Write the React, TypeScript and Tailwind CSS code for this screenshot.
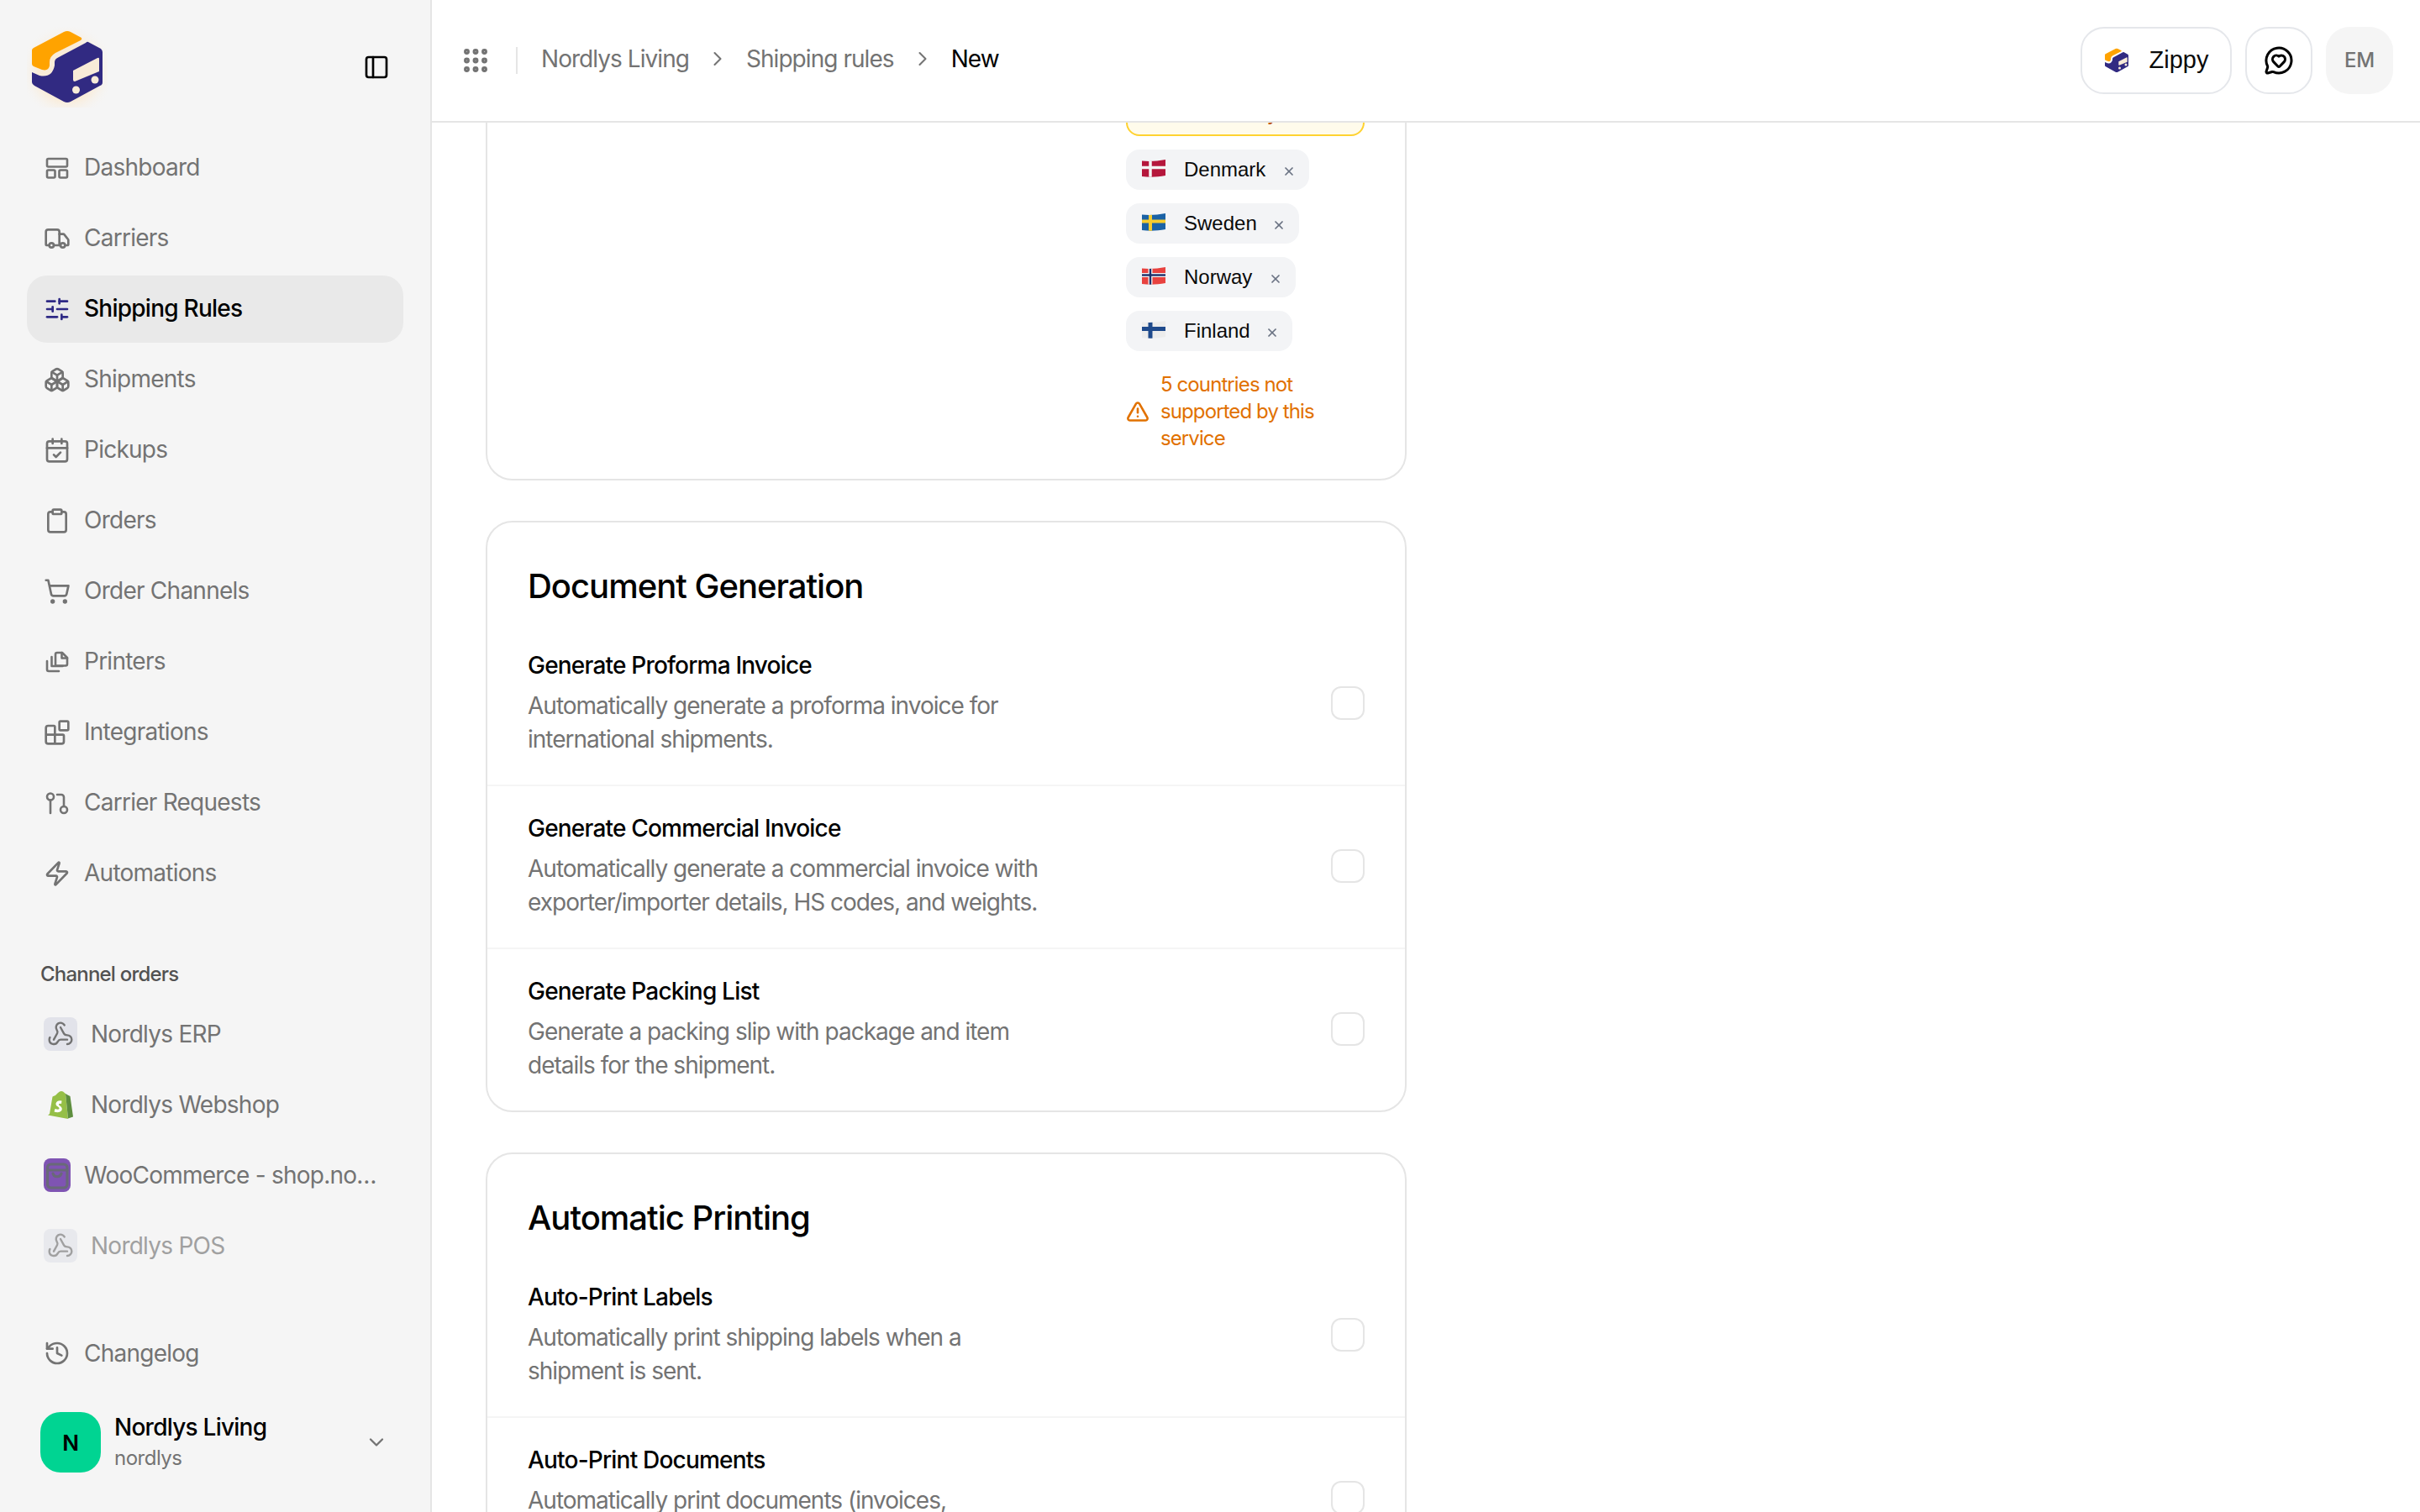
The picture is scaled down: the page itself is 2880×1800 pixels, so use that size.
import {
  Blocks,
  Boxes,
  CalendarCheck,
  ChevronDown,
  ChevronRight,
  Clipboard,
  Grip,
  History,
  MessageCircleHeart,
  PanelLeft,
  ShoppingCart,
  SlidersHorizontal,
  TriangleAlert,
  Truck,
  Webhook,
  X,
  Zap,
} from 'lucide-react'

const iconCls = 'w-[32px] h-[32px] shrink-0'

const DashboardIcon = () => (
  <svg className={iconCls} viewBox="-2 -2 32 32" fill="none" stroke="currentColor" strokeWidth="2.6" strokeLinejoin="round">
    <rect x="2" y="3" width="24" height="9.5" rx="1.5" />
    <rect x="2" y="16.5" width="9.5" height="9" rx="1.5" />
    <rect x="16.5" y="16.5" width="9.5" height="9" rx="1.5" />
  </svg>
)

const PrintersIcon = () => (
  <svg className={iconCls} viewBox="-2 -2 32 32" fill="none" stroke="currentColor" strokeWidth="2.6" strokeLinecap="round" strokeLinejoin="round">
    <path d="M2 13v10a2 2 0 0 0 2 2h12" />
    <path d="M7.5 8v11h13" />
    <path d="M12 18.5V5a2 2 0 0 1 2-2h6l6 6v7.5a2 2 0 0 1-2 2H12z" />
    <path d="M19.5 3v6.5H26" />
  </svg>
)

const RequestsIcon = () => (
  <svg className={iconCls} viewBox="-2 -2 32 32" fill="none" stroke="currentColor" strokeWidth="2.6" strokeLinecap="round" strokeLinejoin="round">
    <circle cx="6" cy="6.5" r="4" />
    <path d="M6 10.5V26" />
    <circle cx="22" cy="22" r="4" />
    <path d="M14 4h5a3 3 0 0 1 3 3v11" />
  </svg>
)

const LogoMark = ({ glow = false, className }: { glow?: boolean; className: string }) => (
  <svg className={className} viewBox={glow ? '32 32 96 96' : '36 35 88 90'}>
    <defs>
      <radialGradient id="logoGlow" cx="0.5" cy="0.55" r="0.6">
        <stop offset="0.6" stopColor="#fbe9cf" stopOpacity="0.75" />
        <stop offset="1" stopColor="#f5f5f5" stopOpacity="0" />
      </radialGradient>
    </defs>
    {glow && <rect x="32" y="32" width="96" height="96" fill="url(#logoGlow)" />}
    <path d="M38 60Q38 58 40 57L76 38Q80 36 84 38L97 45Q98 47 96 48L66 63Q59 67 59 74L59 78Q58 85 50 83L40 79Q38 78 38 76Z" fill="#ffa300" />
    <path d="M105 50L120 58Q122 60 122 62L122 98Q122 101 119 102L84 121Q80 123 76 121L41 102Q38 100 38 98L38 86L47 90Q62 93 65 78L65 74Q65 70 70 68L102 51Q104 49 105 50Z" fill="#312a82" />
    <path d="M87 84L116 69Q118 68 118 70L118 85L89 97Q87 97 87 95Z" fill="#f8ebd8" />
    <ellipse cx="90.5" cy="107" rx="4.5" ry="4.5" fill="#f8ebd8" />
    <ellipse cx="113" cy="95" rx="4.5" ry="4.5" fill="#f8ebd8" />
  </svg>
)

const ShopifyIcon = () => (
  <svg className="w-[30px] h-[34px]" viewBox="0 0 30 34">
    <path d="M2 28L5.5 7.5Q10 6 12 3Q15 0 18 1.5L21 4L24 34L0 29.5Z" fill="#95bf47" />
    <path d="M21 4L23.5 5.5L26.5 7L30 31.5L24 33.5Z" fill="#5e8e3e" />
    <path d="M16.5 12.5Q11 11.5 9.5 15.5Q9 18 12 19.5Q14 20.5 13.5 22Q12.5 23.5 8.5 22L7.5 25.5Q13 27.5 16 24.5Q18 21.5 15 19Q12.5 17.5 13 16.5Q13.5 15.5 16 16Z" fill="#fff" />
  </svg>
)

const WooIcon = () => (
  <div className="w-[32px] h-[40px] rounded-[8px] bg-[#7f54b3] shrink-0 flex items-center justify-center">
    <svg className="w-[32px] h-[40px]" viewBox="0 0 32 40" fill="none" stroke="#696978" strokeWidth="3.2" strokeLinecap="round" strokeLinejoin="round">
      <rect x="4.5" y="7" width="23.5" height="28" rx="4" />
      <path d="M4.5 14h23.5" />
      <path d="M11 18c1 5 9 5 10 0" />
    </svg>
  </div>
)

const WebhookBadge = () => (
  <div className="w-[40px] h-[40px] rounded-[8px] bg-[#e2e3ea] shrink-0 flex items-center justify-center">
    <Webhook className="w-[32px] h-[32px] text-[#737373]" strokeWidth={1.8} />
  </div>
)

const navItems = [
  { label: 'Dashboard', icon: <DashboardIcon /> },
  { label: 'Carriers', icon: <Truck className={iconCls} strokeWidth={2} /> },
  { label: 'Shipping Rules', icon: <SlidersHorizontal className={`${iconCls} text-[#2f2a85]`} strokeWidth={2} />, active: true },
  { label: 'Shipments', icon: <Boxes className={iconCls} strokeWidth={2} /> },
  { label: 'Pickups', icon: <CalendarCheck className={iconCls} strokeWidth={2} /> },
  { label: 'Orders', icon: <Clipboard className={iconCls} strokeWidth={2} /> },
  { label: 'Order Channels', icon: <ShoppingCart className={iconCls} strokeWidth={2} /> },
  { label: 'Printers', icon: <PrintersIcon /> },
  { label: 'Integrations', icon: <Blocks className={iconCls} strokeWidth={2} /> },
  { label: 'Carrier Requests', icon: <RequestsIcon /> },
  { label: 'Automations', icon: <Zap className={iconCls} strokeWidth={2} /> },
]

const Sidebar = () => (
  <aside className="w-[514px] shrink-0 h-full bg-[#f5f5f5] border-r-2 border-[#e5e5e5] flex flex-col px-[32px]">
    <div className="h-[160px] shrink-0 flex items-start justify-between">
      <LogoMark glow className="w-[96px] h-[96px] mt-[32px]" />
      <PanelLeft className="w-[32px] h-[32px] mt-[64px] mr-[16px] text-black" strokeWidth={2} />
    </div>
    <nav className="flex flex-col gap-[4px]">
      {navItems.map((item) => (
        <div
          key={item.label}
          className={`h-[80px] flex items-center gap-[16px] pl-[20px] rounded-[24px] text-[28px] tracking-[-0.75px] ${
            item.active ? 'bg-[#e9e9e9] text-black font-medium' : 'text-[#737373]'
          }`}
        >
          {item.icon}
          <span className="-mt-[2px]">{item.label}</span>
        </div>
      ))}
    </nav>
    <div className="mt-[64px] pl-[16px] text-[24px] leading-[32px] font-medium tracking-[-0.8px] text-[#525252]">Channel orders</div>
    <div className="mt-[15px] flex flex-col gap-[4px] text-[28px] tracking-[-0.75px] text-[#737373]">
      <div className="h-[80px] flex items-center gap-[16px] pl-[20px]">
        <WebhookBadge />
        <span>Nordlys ERP</span>
      </div>
      <div className="h-[80px] flex items-center gap-[16px] pl-[20px]">
        <div className="w-[40px] flex justify-center shrink-0">
          <ShopifyIcon />
        </div>
        <span>Nordlys Webshop</span>
      </div>
      <div className="h-[80px] flex items-center gap-[16px] pl-[20px]">
        <WooIcon />
        <span className="truncate w-[350px]">WooCommerce - shop.nordlys.com</span>
      </div>
      <div className="h-[80px] flex items-center gap-[16px] pl-[20px] opacity-65">
        <WebhookBadge />
        <span>Nordlys POS</span>
      </div>
    </div>
    <div className="mt-[48px] h-[80px] flex items-center gap-[16px] pl-[20px] text-[28px] tracking-[-0.75px] text-[#737373]">
      <History className={iconCls} strokeWidth={2} />
      <span>Changelog</span>
    </div>
    <div className="mt-[29px] pl-[16px] flex items-center">
      <div className="w-[72px] h-[72px] rounded-[24px] bg-[#00d492] flex items-center justify-center text-[26px] font-semibold text-black">N</div>
      <div className="ml-[16px] flex-1 flex flex-col">
        <span className="text-[28px] leading-[38px] font-medium text-black tracking-[-0.75px]">Nordlys Living</span>
        <span className="text-[24px] leading-[36px] text-[#737373] tracking-[-0.5px]">nordlys</span>
      </div>
      <ChevronDown className="w-[28px] h-[28px] mr-[18px] text-[#737373]" strokeWidth={2} />
    </div>
  </aside>
)

const Header = () => (
  <header className="h-[146px] shrink-0 bg-white border-b-2 border-[#e5e5e5] flex items-center pl-[34px] pr-[32px] relative z-10">
    <Grip className="w-[36px] h-[36px] text-[#737373]" strokeWidth={2.6} />
    <div className="w-[2px] h-[32px] bg-[#e5e5e5] ml-[30px] mr-[28px]" />
    <div className="flex items-center text-[28px] tracking-[-0.95px] text-[#737373] -mt-[4px]">
      <span>Nordlys Living</span>
      <ChevronRight className="w-[28px] h-[28px] mx-[20px]" strokeWidth={1.8} />
      <span>Shipping rules</span>
      <ChevronRight className="w-[28px] h-[28px] mx-[20px]" strokeWidth={1.8} />
      <span className="text-black">New</span>
    </div>
    <div className="ml-auto flex items-center gap-[16px]">
      <div className="h-[80px] w-[180px] rounded-[28px] border-2 border-[#e5e7eb] flex items-center justify-center gap-[24px] font-['Liberation_Sans',sans-serif] text-[29px] text-[#0a0a0a]">
        <LogoMark className="w-[30px] h-[30px]" />
        <span>Zippy</span>
      </div>
      <div className="h-[80px] w-[80px] rounded-[28px] border-2 border-[#e5e7eb] flex items-center justify-center">
        <MessageCircleHeart className="w-[36px] h-[36px] text-black" strokeWidth={2} />
      </div>
      <div className="h-[80px] w-[80px] rounded-[28px] bg-[#f5f5f5] flex items-center justify-center text-[24px] font-medium tracking-[-0.3px] text-[#737373]">
        EM
      </div>
    </div>
  </header>
)

const Flag = ({ id, base, cross, inner, arm }: { id: string; base: string; cross: string; inner?: string; arm: 'w-3' | 'w-4' | 'w-5' }) => {
  const size = arm === 'w-3' ? 3.5 : arm === 'w-4' ? 4 : 5
  const x = 10 - size / 2
  const y = 9.5 - size / 2
  return (
    <svg className="w-[28px] h-[21px] -mt-[4px] shrink-0" viewBox="0 0 28 21">
      <defs>
        <clipPath id={id}>
          <path d="M0 1.5C8 2.5 18 2 28 0L28 19C18 21 8 21 0 20Z" />
        </clipPath>
      </defs>
      <g clipPath={`url(#${id})`}>
        <rect width="28" height="21" fill={base} />
        <rect x={x} width={size} height="21" fill={cross} />
        <rect y={y} width="28" height={size} fill={cross} />
        {inner && <rect x="8.8" width="2.4" height="21" fill={inner} />}
        {inner && <rect y="8.3" width="28" height="2.4" fill={inner} />}
      </g>
    </svg>
  )
}

const countries = [
  { name: 'Denmark', base: '#b5173c', cross: '#f4f4f4', arm: 'w-3' as const, width: 'w-[218px]' },
  { name: 'Sweden', base: '#1b62a5', cross: '#f7cc2e', arm: 'w-4' as const, width: 'w-[206px]' },
  { name: 'Norway', base: '#e8423f', cross: '#f4f4f4', inner: '#1c2f6b', arm: 'w-5' as const, width: 'w-[202px]' },
  { name: 'Finland', base: '#ececec', cross: '#1f4a8c', arm: 'w-5' as const, width: 'w-[198px]' },
]

const CountryChip = ({ name, base, cross, inner, arm, width }: (typeof countries)[number]) => (
  <div className={`${width} h-[48px] rounded-[16px] bg-[#f3f4f6] flex items-center pl-[19px] font-['Liberation_Sans',sans-serif] text-[24px] text-[#0a0a0a]`}>
    <Flag id={`flag-${name}`} base={base} cross={cross} inner={inner} arm={arm} />
    <span className="ml-[22px]">{name}</span>
    <X className="ml-auto mr-[16px] w-[16px] h-[16px] mt-[3px] text-[#6a7282]" strokeWidth={2.6} />
  </div>
)

const CountriesCard = () => (
  <section className="bg-white border-2 border-[#e5e5e5] rounded-[32px] pt-[50px] pb-[32px] pr-[48px] flex justify-end">
    <div className="w-[284px] flex flex-col">
      <div className="h-[64px] rounded-[16px] border-2 border-[#ffd230] bg-[#fffbeb] flex items-end pl-[16px] pb-[9px] font-['Liberation_Sans',sans-serif] text-[24px] leading-[32px] text-[#bb4d00]">
        Limited country
      </div>
      <div className="mt-[16px] flex flex-col gap-[16px]">
        {countries.map((c) => (
          <CountryChip key={c.name} {...c} />
        ))}
      </div>
      <div className="mt-[24px] flex items-center gap-[13px] text-[24px] leading-[32px] tracking-[-0.9px] text-[#e17100]">
        <TriangleAlert className="w-[28px] h-[28px] shrink-0" strokeWidth={2.2} />
        <span className="w-[200px]">5 countries not supported by this service</span>
      </div>
    </div>
  </section>
)

const SettingRow = ({ title, lines, last }: { title: string; lines: string[]; last?: boolean }) => (
  <div className={`flex items-center justify-between pl-[48px] pr-[48px] pt-[32px] pb-[34px] ${last ? '' : 'border-b-2 border-[#f5f5f5]'}`}>
    <div>
      <div className="text-[28px] leading-[36px] font-medium text-black tracking-[-0.8px]">{title}</div>
      <div className="mt-[10px] text-[28px] leading-[40px] text-[#737373] tracking-[-1px]">
        {lines.map((line) => (
          <div key={line}>{line}</div>
        ))}
      </div>
    </div>
    <div className="w-[40px] h-[40px] rounded-[12px] border-2 border-[#e5e5e5] bg-white shrink-0" />
  </div>
)

const SettingsCard = ({ title, rows }: { title: string; rows: { title: string; lines: string[] }[] }) => (
  <section className="bg-white border-2 border-[#e5e5e5] rounded-[32px]">
    <h2 className="h-[120px] pl-[48px] pt-[48px] text-[40px] leading-[56px] font-medium text-black tracking-[-1px]">{title}</h2>
    {rows.map((row, i) => (
      <SettingRow key={row.title} {...row} last={i === rows.length - 1} />
    ))}
  </section>
)

const docRows = [
  { title: 'Generate Proforma Invoice', lines: ['Automatically generate a proforma invoice for', 'international shipments.'] },
  { title: 'Generate Commercial Invoice', lines: ['Automatically generate a commercial invoice with', 'exporter/importer details, HS codes, and weights.'] },
  { title: 'Generate Packing List', lines: ['Generate a packing slip with package and item', 'details for the shipment.'] },
]

const printRows = [
  { title: 'Auto-Print Labels', lines: ['Automatically print shipping labels when a', 'shipment is sent.'] },
  { title: 'Auto-Print Documents', lines: ['Automatically print documents (invoices,', 'packing lists) when a shipment is sent.'] },
]

export default function App() {
  return (
    <div className="h-screen w-full flex overflow-hidden bg-white font-['Inter',sans-serif]">
      <Sidebar />
      <main className="flex-1 min-w-0 h-full flex flex-col">
        <Header />
        <div className="flex-1 overflow-hidden pl-[64px]">
          <div className="w-[1096px] -mt-[100px] flex flex-col gap-[48px]">
            <CountriesCard />
            <SettingsCard title="Document Generation" rows={docRows} />
            <SettingsCard title="Automatic Printing" rows={printRows} />
          </div>
        </div>
      </main>
    </div>
  )
}
